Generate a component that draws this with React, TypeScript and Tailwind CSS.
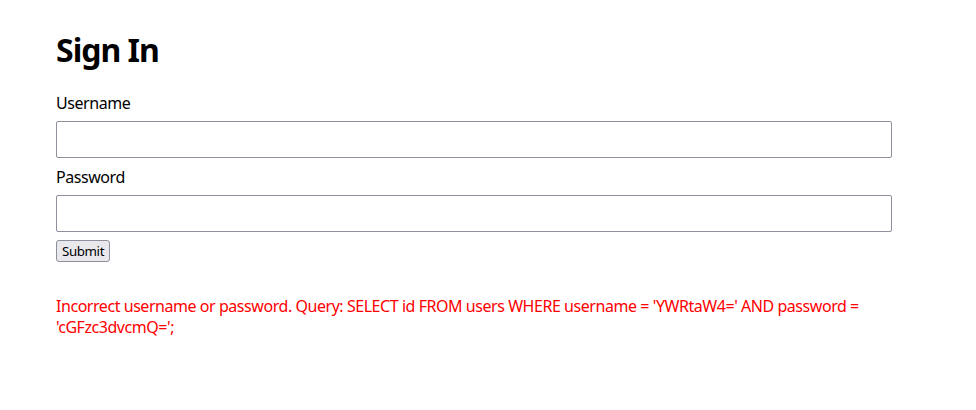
export default function App() {
  return (
    <div className="min-h-screen bg-white px-[56px] pt-[28px] font-['Noto_Sans',sans-serif] text-black">
      <h1 className="text-[32px] font-bold leading-[43px] tracking-[-1px]">Sign In</h1>
      <form className="mt-[22px]" onSubmit={(e) => e.preventDefault()}>
        <label className="block text-[16px] leading-[21px] tracking-[-0.45px]">Username</label>
        <input
          type="text"
          className="mt-[7px] mb-[9px] block h-[37px] w-[836px] rounded-[2px] border border-[#8f8f9d] bg-white"
        />
        <label className="block text-[16px] leading-[21px] tracking-[-0.45px]">Password</label>
        <input
          type="password"
          className="mt-[7px] block h-[37px] w-[836px] rounded-[2px] border border-[#8f8f9d] bg-white"
        />
        <button
          type="submit"
          className="mt-[8px] block h-[22px] rounded-[3px] border border-[#8f8f9d] bg-[#e9e9ed] px-[5px] text-[13.33px] leading-[18px] tracking-[-0.4px]"
        >
          Submit
        </button>
      </form>
      <p className="mt-[34px] w-[836px] text-[16px] leading-[21px] tracking-[-0.45px] text-[#ff0000]">
        Incorrect username or password. Query: SELECT id FROM users WHERE username = 'YWRtaW4=' AND password = 'cGFzc3dvcmQ=';
      </p>
    </div>
  );
}
